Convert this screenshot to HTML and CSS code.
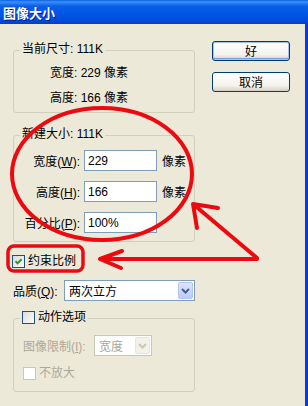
FILE: index.html
```html
<!DOCTYPE html>
<html lang="zh-CN">
<head>
    <meta charset="UTF-8">
    <title>图像大小</title>
    <link rel="stylesheet" href="styles.css">
</head>
<body>
<div class="window">
    <div class="titlebar"><span class="title">图像大小</span></div>
    <div class="client">
        <div class="main">
            <fieldset class="group current">
                <legend>当前尺寸: 111K</legend>
                <div class="group-body">
                    <div class="info-row">宽度: 229 像素</div>
                    <div class="info-row">高度: 166 像素</div>
                </div>
            </fieldset>

            <fieldset class="group newsize">
                <legend>新建大小: 111K</legend>
                <div class="size-grid">
                    <label>宽度(<u>W</u>):</label>
                    <input class="field" type="text" value="229">
                    <span>像素</span>
                    <label>高度(<u>H</u>):</label>
                    <input class="field" type="text" value="166">
                    <span>像素</span>
                    <label>百分比(<u>P</u>):</label>
                    <input class="field" type="text" value="100%">
                    <span></span>
                </div>
            </fieldset>

            <div class="check constrain">
                <span class="box">
                    <svg width="11" height="11" viewBox="0 0 11 11"><path d="M2.5 5.2 L4.5 7.4 L8.6 3.2" fill="none" stroke="#21a121" stroke-width="2"/></svg>
                </span>
                约束比例
            </div>

            <div class="quality">
                <span class="quality-label">品质(<u>Q</u>):</span>
                <div class="combo">
                    <span class="combo-text">两次立方</span>
                    <span class="combo-btn">
                        <svg width="9" height="6" viewBox="0 0 9 6"><path d="M1 1 L4.5 4.5 L8 1" fill="none" stroke="#4d6185" stroke-width="2"/></svg>
                    </span>
                </div>
            </div>

            <fieldset class="group actions">
                <legend><span class="check"><span class="box"></span>动作选项</span></legend>
                <div class="group-body">
                    <div class="limit-row">
                        <span class="limit-label">图像限制(<u>I</u>):</span>
                        <div class="combo small disabled">
                            <span class="combo-text">宽度</span>
                            <span class="combo-btn">
                                <svg width="9" height="6" viewBox="0 0 9 6"><path d="M1 1 L4.5 4.5 L8 1" fill="none" stroke="#c9c7ba" stroke-width="2"/></svg>
                            </span>
                        </div>
                    </div>
                    <div class="check disabled noscale"><span class="box"></span>不放大</div>
                </div>
            </fieldset>
        </div>

        <div class="buttons">
            <button class="btn default">好</button>
            <button class="btn">取消</button>
        </div>
    </div>

    <!-- red hand-drawn marks over the dialog -->
    <svg class="marks" width="308" height="406" viewBox="0 0 308 406">
        <g fill="none" stroke="#ec0a10" stroke-width="4" stroke-linecap="round" stroke-linejoin="round">
            <ellipse cx="102" cy="174" rx="90" ry="66"/>
            <path d="M257 258 L193 204 M193 204 L218 208 M193 204 L197 228"/>
            <path d="M257 259 L100 259 M100 259 L122 251 M100 259 L121 268"/>
            <rect x="8" y="246" width="75" height="25" rx="6" stroke-width="3.5"/>
        </g>
    </svg>
</div>
</body>
</html>
```

FILE: styles.css
```css
body {
    margin: 0;
    font-family: 'Liberation Sans', 'Noto Sans CJK SC', sans-serif;
    font-size: 12px;
    color: #000;
}

.window {
    position: relative;
    width: 308px;
    height: 406px;
    overflow: hidden;
    background: #ece9d8;
}

.titlebar {
    height: 24px;
    display: flex;
    align-items: center;
    padding-left: 3px;
    background: linear-gradient(#0a61e6 0%, #3d8ff7 8%, #0a5fe9 25%, #0055e5 60%, #0049d8 90%, #003fc4 100%);
}

.title {
    color: #fff;
    font-weight: bold;
    font-size: 13px;
    font-family: 'Noto Sans CJK SC', sans-serif;
    text-shadow: 1px 1px 0 #0a1883;
}

.client {
    display: flex;
    gap: 17px;
    height: 382px;
    box-sizing: border-box;
    padding: 17px 0 0 13px;
    border-right: 3px solid #0a3be0;
}

.main {
    width: 182px;
    padding-top: 1px;
    display: flex;
    flex-direction: column;
}

.group {
    margin: 0;
    padding: 0;
    border: 1px solid #d0d0bf;
    border-radius: 3px;
    min-width: 0;
}

.group legend {
    margin-left: 6px;
    padding: 0 2px 2px;
    line-height: 14px;
}

.current .group-body {
    padding: 3px 0 1px 36px;
}

.info-row {
    height: 25px;
    line-height: 24px;
}

.newsize {
    margin-top: 14px;
    padding: 7px 0 8px 0;
}

.size-grid {
    display: grid;
    grid-template-columns: 66px 73px auto;
    column-gap: 4px;
    row-gap: 10px;
    align-items: center;
}

.size-grid label {
    text-align: right;
}

.size-grid span {
    padding-left: 1px;
}

.field {
    width: 73px;
    height: 21px;
    box-sizing: border-box;
    border: 1px solid #7f9db9;
    padding: 0 3px;
    font: inherit;
    background: #fff;
    outline: none;
}

.check {
    display: flex;
    align-items: center;
    gap: 3px;
    line-height: 14px;
}

.box {
    width: 13px;
    height: 13px;
    box-sizing: border-box;
    border: 1px solid #1c5180;
    background: linear-gradient(135deg, #dcdcd7, #fbfbf9);
    display: flex;
    align-items: center;
    justify-content: center;
}

.constrain {
    margin: 12px 0 0 -1px;
}

.quality {
    margin-top: 12px;
    display: flex;
    align-items: center;
}

.quality-label {
    width: 51px;
}

.combo {
    width: 131px;
    height: 21px;
    box-sizing: border-box;
    border: 1px solid #7f9db9;
    background: #fff;
    display: flex;
    align-items: center;
    padding: 1px;
}

.combo-text {
    flex: 1;
    padding-left: 3px;
}

.combo-btn {
    width: 15px;
    height: 17px;
    box-sizing: border-box;
    border: 1px solid #b5c7f0;
    border-radius: 2px;
    background: linear-gradient(#dbe5fd, #b9cbf7);
    display: flex;
    align-items: center;
    justify-content: center;
}

.combo.small {
    width: 58px;
}

.combo.disabled {
    border-color: #c9c7ba;
    color: #aca899;
}

.combo.disabled .combo-btn {
    border-color: #e8e6db;
    background: #f3f1e8;
}

.actions {
    margin-top: 9px;
}

.actions .group-body {
    padding: 9px 0 11px 9px;
}

.limit-row {
    display: flex;
    align-items: center;
    color: #aca899;
}

.limit-label {
    width: 71px;
}

.noscale {
    margin-top: 10px;
}

.check.disabled {
    color: #aca899;
}

.check.disabled .box {
    border-color: #cac8bb;
    background: #fff;
}

.buttons {
    display: flex;
    flex-direction: column;
    gap: 11px;
}

.btn {
    width: 78px;
    height: 20px;
    box-sizing: border-box;
    border: 1px solid #003c74;
    border-radius: 3px;
    background: linear-gradient(#ffffff, #f3f2ec 70%, #d6d0c5);
    font-family: 'Noto Sans CJK SC', sans-serif;
    font-size: 12px;
    padding: 0;
    line-height: 16px;
}

.btn.default {
    box-shadow: inset 0 0 0 1px #a6c1ec, inset 0 -1px 0 1px #7c9ee0;
}

.marks {
    position: absolute;
    left: 0;
    top: 0;
    pointer-events: none;
}
```
